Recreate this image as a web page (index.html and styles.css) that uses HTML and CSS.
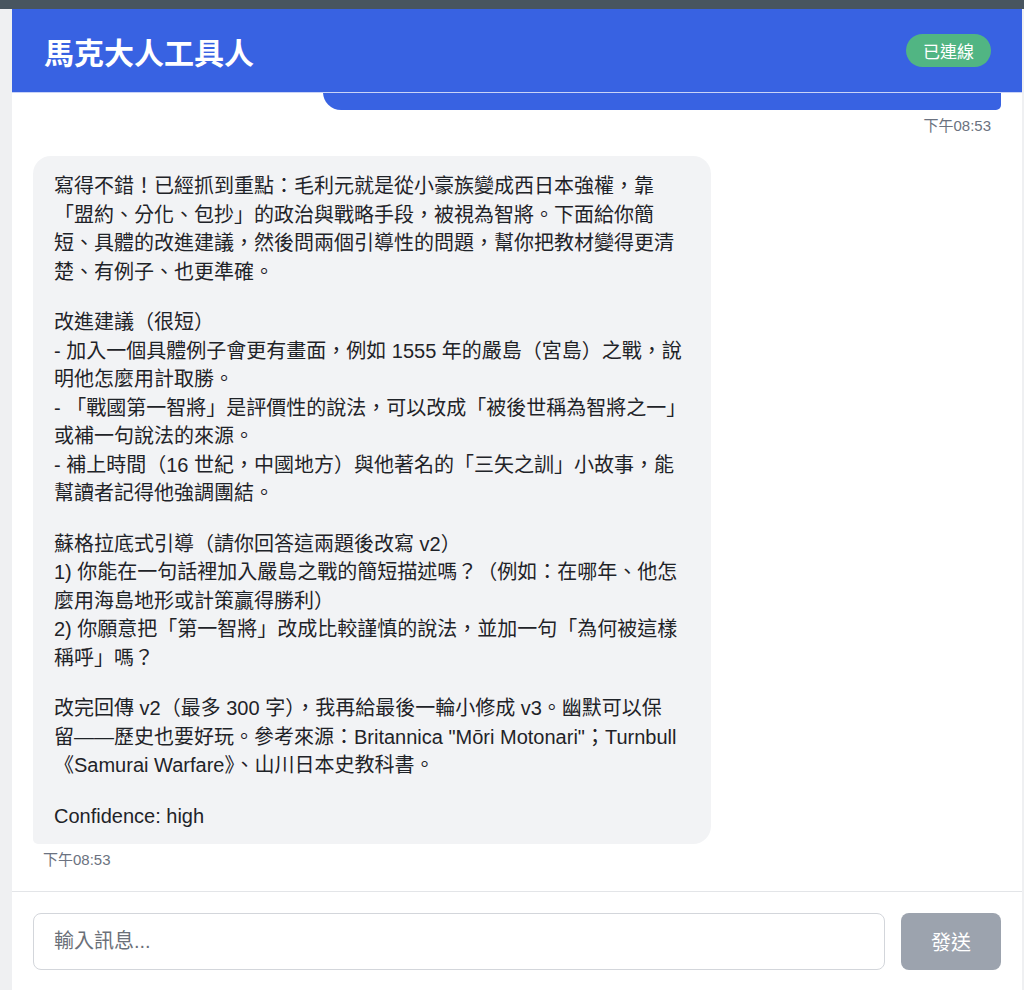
FILE: index.html
```html
<!DOCTYPE html>
<html lang="zh-Hant">
<head>
<meta charset="utf-8"/>
    <title>馬克大人工具人</title>
    <link rel="stylesheet" href="styles.css">
</head>
<body>
    <div class="topbar"></div>
    <div id="app">
        <div class="header">
            <h1 class="title">馬克大人工具人</h1>
            <span class="badge">已連線</span>
        </div>

        <div class="messages">
            <div class="msg user">
                <div class="bubble">請幫我看看這段關於毛利元就的介紹寫得怎麼樣？</div>
                <div class="time">下午08:53</div>
            </div>

            <div class="msg bot">
                <div class="bubble">
                    <p>寫得不錯！已經抓到重點：毛利元就是從小豪族變成西日本強權，靠<br>「盟約、分化、包抄」的政治與戰略手段，被視為智將。下面給你簡<br>短、具體的改進建議，然後問兩個引導性的問題，幫你把教材變得更清<br>楚、有例子、也更準確。</p>
                    <p>改進建議（很短）<br>- 加入一個具體例子會更有畫面，例如 1555 年的嚴島（宮島）之戰，說<br>明他怎麼用計取勝。<br>- 「戰國第一智將」是評價性的說法，可以改成「被後世稱為智將之一」<br>或補一句說法的來源。<br>- 補上時間（16 世紀，中國地方）與他著名的「三矢之訓」小故事，能<br>幫讀者記得他強調團結。</p>
                    <p>蘇格拉底式引導（請你回答這兩題後改寫 v2）<br>1) 你能在一句話裡加入嚴島之戰的簡短描述嗎？（例如：在哪年、他怎<br>麼用海島地形或計策贏得勝利）<br>2) 你願意把「第一智將」改成比較謹慎的說法，並加一句「為何被這樣<br>稱呼」嗎？</p>
                    <p>改完回傳 v2（最多 300 字），我再給最後一輪小修成 v3。幽默可以保<br>留——歷史也要好玩。參考來源：Britannica "Mōri Motonari"；Turnbull<br>《Samurai Warfare》、山川日本史教科書。</p>
                    <p>Confidence: high</p>
                </div>
                <div class="time">下午08:53</div>
            </div>
        </div>

        <div class="footer">
            <input type="text" class="input" placeholder="輸入訊息..." />
            <button class="send">發送</button>
        </div>
    </div>
</body>
</html>
```

FILE: styles.css
```css
        html, body {
            margin: 0;
            padding: 0;
            height: 990px;
            overflow: hidden;
        }
        body {
            background: #eff0f2;
            font-family: "Liberation Sans", "Noto Sans CJK TC", sans-serif;
            color: #1f2328;
        }
        .topbar {
            height: 9px;
            background: #48555f;
        }
        #app {
            margin-left: 12px;
            width: 1010px;
            height: 981px;
            background: white;
            display: flex;
            flex-direction: column;
        }
        .header {
            height: 83px;
            flex-shrink: 0;
            background: #3862e2;
            border-bottom: 1px solid #c9d3f7;
            display: flex;
            align-items: center;
            justify-content: space-between;
            padding: 0 31px 0 32px;
        }
        .title {
            margin: 0;
            color: white;
            font-size: 30px;
            font-weight: bold;
            font-family: "Noto Sans CJK TC", sans-serif;
        }
        .badge {
            background: #51b583;
            color: white;
            height: 33px;
            line-height: 33px;
            padding: 0 17px;
            border-radius: 17px;
            font-size: 17px;
            font-family: "Noto Sans CJK TC", sans-serif;
        }
        .messages {
            flex: 1;
            overflow: hidden;
            display: flex;
            flex-direction: column;
            justify-content: flex-end;
            padding: 0 21px 21px 21px;
            gap: 20px;
        }
        .msg {
            display: flex;
            flex-direction: column;
            flex-shrink: 0;
        }
        .msg.user { align-items: flex-end; }
        .msg.bot { align-items: flex-start; }
        .bubble {
            max-width: 70%;
            box-sizing: border-box;
        }
        .user .bubble {
            width: 70%;
            background: #3862e2;
            color: white;
            border-radius: 18px 18px 5px 18px;
            padding: 14px 20px;
            font-size: 20px;
            line-height: 28.5px;
        }
        .bot .bubble {
            width: 70%;
            background: #f2f3f5;
            border-radius: 18px 18px 18px 5px;
            padding: 16px 21px 14px 21px;
            font-size: 20px;
            line-height: 28.5px;
        }
        .bot .bubble p {
            margin: 0 0 22px 0;
            white-space: nowrap;
        }
        .bot .bubble p:last-child { margin-bottom: 0; }
        .time {
            font-size: 15px;
            line-height: 20px;
            color: #6b7280;
            margin-top: 6px;
        }
        .user .time { margin-right: 10px; }
        .bot .time { margin-left: 10px; }
        .footer {
            flex-shrink: 0;
            border-top: 1px solid #e3e5e8;
            padding: 21px 21px 20px 21px;
            display: flex;
            gap: 16px;
        }
        .input {
            flex: 1;
            height: 57px;
            box-sizing: border-box;
            border: 1px solid #d3d6db;
            border-radius: 8px;
            padding: 0 20px;
            font-size: 20px;
            font-family: "Liberation Sans", "Noto Sans CJK TC", sans-serif;
            outline: none;
        }
        .input::placeholder { color: #6b7078; }
        .send {
            width: 100px;
            height: 57px;
            border: none;
            border-radius: 8px;
            background: #9ca3ae;
            color: white;
            font-size: 20px;
            font-family: "Noto Sans CJK TC", sans-serif;
        }
```
